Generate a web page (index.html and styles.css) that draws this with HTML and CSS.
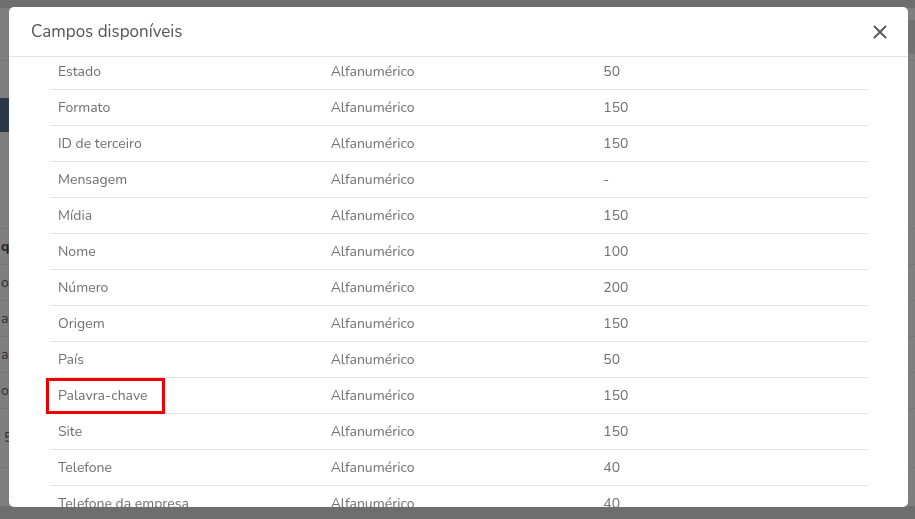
FILE: index.html
```html
<!DOCTYPE html>
<html lang="pt-BR">
<head>
  <meta charset="UTF-8" />
  <meta name="viewport" content="width=device-width, initial-scale=1.0"/>
  <title>Campos disponíveis</title>
  <link rel="stylesheet" href="styles.css">
</head>
<body>
  <div class="page">
    <div class="topbar"></div>
    <div class="subbar"><span class="sub-btn"></span></div>
    <div class="toolbar"><span class="tool-btn"></span></div>
    <div class="page-list">
      <div class="page-row"></div>
      <div class="page-row head">qu</div>
      <div class="page-row">oc</div>
      <div class="page-row">an</div>
      <div class="page-row">an</div>
      <div class="page-row">oc</div>
      <div class="page-row tall">5</div>
    </div>
  </div>

  <div class="backdrop"></div>

  <div class="modal">
    <div class="modal-header">
      <h3>Campos disponíveis</h3>
      <button class="close-btn" aria-label="Fechar">
        <svg width="14" height="14" viewBox="0 0 14 14">
          <path d="M1.5 1.5 L12.5 12.5 M12.5 1.5 L1.5 12.5" stroke="#555" stroke-width="1.8" stroke-linecap="round"/>
        </svg>
      </button>
    </div>
    <div class="modal-body">
      <table class="fields">
        <tbody>
          <tr><td>Estado</td><td>Alfanumérico</td><td>50</td></tr>
          <tr><td>Formato</td><td>Alfanumérico</td><td>150</td></tr>
          <tr><td>ID de terceiro</td><td>Alfanumérico</td><td>150</td></tr>
          <tr><td>Mensagem</td><td>Alfanumérico</td><td>-</td></tr>
          <tr><td>Mídia</td><td>Alfanumérico</td><td>150</td></tr>
          <tr><td>Nome</td><td>Alfanumérico</td><td>100</td></tr>
          <tr><td>Número</td><td>Alfanumérico</td><td>200</td></tr>
          <tr><td>Origem</td><td>Alfanumérico</td><td>150</td></tr>
          <tr><td>País</td><td>Alfanumérico</td><td>50</td></tr>
          <tr><td class="marked">Palavra-chave</td><td>Alfanumérico</td><td>150</td></tr>
          <tr><td>Site</td><td>Alfanumérico</td><td>150</td></tr>
          <tr><td>Telefone</td><td>Alfanumérico</td><td>40</td></tr>
          <tr><td>Telefone da empresa</td><td>Alfanumérico</td><td>40</td></tr>
          <tr><td>Título</td><td>Alfanumérico</td><td>150</td></tr>
        </tbody>
      </table>
    </div>
  </div>
</body>
</html>
```

FILE: styles.css
```css
body {
  margin: 0;
  font-family: 'Nunito', 'Lato', 'Open Sans', sans-serif;
  background-color: #7f7f7f;
  height: 519px;
  overflow: hidden;
}

/* page behind the modal (already dimmed) */
.page {
  height: 519px;
  display: flex;
  flex-direction: column;
}

.topbar {
  height: 8px;
  background-color: #6e6e6e;
}

.subbar {
  height: 52px;
  border-bottom: 1px solid #757575;
  display: flex;
  justify-content: flex-end;
  align-items: flex-start;
}

.sub-btn {
  width: 30px;
  height: 34px;
  margin-top: 12px;
  background-color: #717171;
}

.toolbar {
  height: 34px;
  margin-top: 37px;
  display: flex;
}

.tool-btn {
  width: 40px;
  background-color: #2a3846;
}

.page-list {
  margin-top: 61px;
  flex: 1;
}

.page-row {
  height: 35px;
  border-bottom: 1px solid #757575;
  color: #2e2e2e;
  font-size: 14px;
  line-height: 35px;
  padding-left: 1px;
}

.page-row.head {
  font-weight: bold;
  color: #222;
}

.page-row.tall {
  height: 58px;
  line-height: 58px;
  padding-left: 4px;
}

.backdrop {
  position: fixed;
  left: 0;
  right: 0;
  bottom: 0;
  height: 13px;
  background-color: #6e6e6e;
}

.modal {
  position: fixed;
  top: 7px;
  left: 9px;
  width: 899px;
  height: 500px;
  background-color: #fff;
  border-radius: 5px;
  display: flex;
  flex-direction: column;
  overflow: hidden;
}

.modal-header {
  height: 49px;
  border-bottom: 1px solid #e3e3e3;
  display: flex;
  align-items: center;
  justify-content: space-between;
  padding: 0 21px 0 22px;
  flex-shrink: 0;
}

.modal-header h3 {
  margin: 0;
  font-size: 17px;
  font-weight: normal;
  color: #555;
}

.close-btn {
  background: none;
  border: none;
  padding: 0;
  width: 14px;
  height: 14px;
  cursor: pointer;
  display: flex;
}

.modal-body {
  flex: 1;
  overflow: hidden;
  padding: 0 40px 0 41px;
}

.fields {
  width: 818px;
  border-collapse: collapse;
  table-layout: fixed;
  margin-top: -3px;
}

.fields td {
  height: 35px;
  padding: 0 8px;
  font-size: 14px;
  color: #6f6f6f;
  border-bottom: 1px solid #e2e2e2;
  vertical-align: middle;
}

.fields .marked {
  position: relative;
}

.fields .marked::after {
  content: "";
  position: absolute;
  left: -4px;
  top: 0;
  width: 113px;
  height: 30px;
  border: 3px solid #ee0000;
}
```
